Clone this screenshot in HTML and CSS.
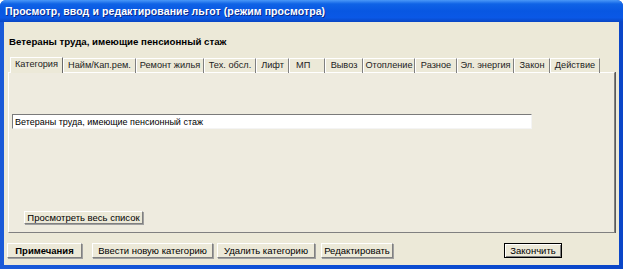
FILE: index.html
```html
<!DOCTYPE html>
<html lang="ru">
<head>
  <meta charset="UTF-8" />
  <title>Просмотр, ввод и редактирование льгот</title>
  <link rel="stylesheet" href="styles.css">
</head>
<body>
  <div class="window">
    <div class="titlebar">Просмотр, ввод и редактирование льгот (режим просмотра)</div>
    <div class="client">
      <div class="caption">Ветераны труда, имеющие пенсионный стаж</div>

      <div class="tabs">
        <div class="tab active">Категория</div>
        <div class="tab">Найм/Кап.рем.</div>
        <div class="tab">Ремонт жилья</div>
        <div class="tab">Тех. обсл.</div>
        <div class="tab">Лифт</div>
        <div class="tab">МП</div>
        <div class="tab">Вывоз</div>
        <div class="tab">Отопление</div>
        <div class="tab">Разное</div>
        <div class="tab">Эл. энергия</div>
        <div class="tab">Закон</div>
        <div class="tab">Действие</div>
      </div>

      <div class="panel">
        <input class="field" type="text" value="Ветераны труда, имеющие пенсионный стаж" readonly />
        <button class="btn btn-list">Просмотреть весь список</button>
      </div>

      <div class="actions">
        <button class="btn btn-notes">Примечания</button>
        <button class="btn btn-new">Ввести новую категорию</button>
        <button class="btn btn-delete">Удалить категорию</button>
        <button class="btn btn-edit">Редактировать</button>
        <button class="btn btn-finish">Закончить</button>
      </div>
    </div>
  </div>
</body>
</html>
```

FILE: styles.css
```css
body {
  margin: 0;
  background: #ffffff;
  font-family: 'Liberation Sans', Arial, sans-serif;
}
.window {
  width: 623px;
  height: 269px;
  display: flex;
  flex-direction: column;
  background: linear-gradient(to right, #1a5ad8, #0c4fd6 50%, #0a46c8);
  border-radius: 6px 6px 0 0;
  overflow: hidden;
}
.titlebar {
  height: 22px;
  flex: none;
  display: flex;
  align-items: center;
  padding-left: 5px;
  color: #fff;
  font-weight: bold;
  font-size: 10.5px;
  letter-spacing: 0.1px;
  text-shadow: 1px 1px 0 #0b2a8a;
  background: linear-gradient(to bottom, #4a98f8 0%, #0f63e6 18%, #0857e2 50%, #0a58e6 80%, #0946c4 100%);
}
.client {
  flex: 1;
  margin: 0 4px 4px 4px;
  background: #ece9d8;
  display: flex;
  flex-direction: column;
}
.caption {
  padding: 14px 0 0 5px;
  font-weight: bold;
  font-size: 9.7px;
  line-height: 12px;
  color: #000;
}
.tabs {
  display: flex;
  margin: 9px 0 0 6px;
  height: 15px;
  position: relative;
  z-index: 1;
}
.tab {
  flex: none;
  white-space: nowrap;
  text-align: center;
  font-size: 9.2px;
  line-height: 13px;
  color: #222;
  border-top: 1px solid #fff;
  border-left: 1px solid #fff;
  border-right: 1px solid #808080;
  box-sizing: border-box;
  height: 15px;
  margin-top: 1px;
}
.tab:nth-child(1) { width: 53px; }
.tab:nth-child(2) { width: 73px; }
.tab:nth-child(3) { width: 68px; }
.tab:nth-child(4) { width: 52px; }
.tab:nth-child(5) { width: 33px; }
.tab:nth-child(6) { width: 36px; text-align: left; padding-left: 6px; }
.tab:nth-child(7) { width: 38px; }
.tab:nth-child(8) { width: 52px; }
.tab:nth-child(9) { width: 42px; }
.tab:nth-child(10) { width: 57px; }
.tab:nth-child(11) { width: 36px; }
.tab:nth-child(12) { width: 50px; }
.tab.active {
  height: 16px;
  margin-top: 0;
  background: #ece9d8;
  border-right-color: #6a6a6a;
}
.panel {
  margin-left: 4px;
  width: 607px;
  height: 161px;
  box-sizing: border-box;
  border-top: 1px solid #fff;
  border-left: 1px solid #fff;
  border-right: 1px solid #808080;
  border-bottom: 1px solid #808080;
  box-shadow: 1px 0 0 #5a5a5a;
  background: #eeebdf;
  display: flex;
  flex-direction: column;
  align-items: flex-start;
  padding: 41px 0 0 3px;
}
.field {
  width: 520px;
  height: 15px;
  box-sizing: border-box;
  margin: 0;
  padding: 0 2px;
  font-family: inherit;
  font-size: 9px;
  color: #000;
  background: #fff;
  border-top: 1px solid #7a7a7a;
  border-left: 1px solid #7a7a7a;
  border-right: 1px solid #f4f4f4;
  border-bottom: 1px solid #f4f4f4;
  outline: none;
}
.btn {
  height: 15px;
  box-sizing: border-box;
  margin: 0;
  padding: 0;
  font-family: inherit;
  font-size: 9.5px;
  color: #000;
  background: #ece9d8;
  border-top: 1px solid #fff;
  border-left: 1px solid #fff;
  border-right: 1px solid #808080;
  border-bottom: 1px solid #808080;
  box-shadow: 1px 1px 0 #a0a0a0;
  cursor: pointer;
}
.btn-list {
  margin: 82px 0 0 12px;
  width: 119px;
  height: 13px;
}
.actions {
  display: flex;
  margin-top: 10px;
  padding-left: 3px;
}
.btn-notes {
  width: 75px;
  font-weight: bold;
}
.btn-new {
  width: 121px;
  margin-left: 10px;
}
.btn-delete {
  width: 98px;
  margin-left: 4px;
}
.btn-edit {
  width: 72px;
  margin-left: 6px;
}
.btn-finish {
  width: 58px;
  margin-left: 111px;
  border: 1px solid #000;
  box-shadow: inset 1px 1px 0 #fff, inset -1px -1px 0 #808080;
}
```
